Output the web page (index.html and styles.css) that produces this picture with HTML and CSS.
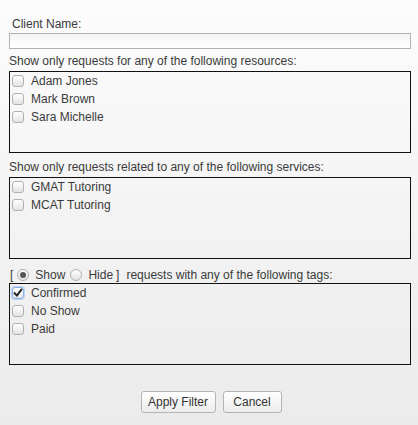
FILE: index.html
```html
<!DOCTYPE html>
<html>
<head>
<meta charset="utf-8">
<link rel="stylesheet" href="styles.css">
</head>
<body>
<div class="filter">
  <div class="label label-client">Client Name:</div>
  <div class="text-input"></div>

  <div class="label">Show only requests for any of the following resources:</div>
  <div class="list-box">
    <div class="item"><span class="cb"></span>Adam Jones</div>
    <div class="item"><span class="cb"></span>Mark Brown</div>
    <div class="item"><span class="cb"></span>Sara Michelle</div>
  </div>

  <div class="label">Show only requests related to any of the following services:</div>
  <div class="list-box">
    <div class="item"><span class="cb"></span>GMAT Tutoring</div>
    <div class="item"><span class="cb"></span>MCAT Tutoring</div>
  </div>

  <div class="label tags-line">
    <span class="bracket">[</span>
    <span class="radio checked"></span><span class="radio-text">Show</span>
    <span class="radio"></span><span class="radio-text">Hide</span>
    <span class="bracket close">]</span>
    <span class="tags-text">requests with any of the following tags:</span>
  </div>
  <div class="list-box">
    <div class="item"><span class="cb checked"><svg viewBox="0 0 12 12" width="12" height="12"><path d="M2.6 6.2 L4.9 8.6 L9.4 2.6" fill="none" stroke="#222" stroke-width="1.9" stroke-linecap="square"/></svg></span>Confirmed</div>
    <div class="item"><span class="cb"></span>No Show</div>
    <div class="item"><span class="cb"></span>Paid</div>
  </div>

  <div class="buttons">
    <button class="btn btn-apply">Apply Filter</button>
    <button class="btn btn-cancel">Cancel</button>
  </div>
</div>
</body>
</html>
```

FILE: styles.css
```css
html, body {
  margin: 0;
  padding: 0;
}
body {
  min-height: 425px;
  background: linear-gradient(#fcfcfc, #ebebeb);
  font-family: "Liberation Sans", Arial, sans-serif;
  font-size: 12px;
  color: #3a3a3a;
}
.filter {
  width: 402px;
  margin-left: 9px;
  padding-top: 17px;
}
.label {
  line-height: 14px;
  margin-top: 7px;
  margin-bottom: 3px;
  white-space: nowrap;
}
.label-client {
  margin-top: 0;
  margin-bottom: 2px;
  padding-left: 3px;
}
.text-input {
  box-sizing: border-box;
  height: 16px;
  border: 1px solid #b3b3b3;
  background: linear-gradient(#f4f4f4, #ffffff);
  margin-bottom: 5px;
}
.label-client + .text-input + .label {
  margin-top: 5px;
}
.list-box {
  box-sizing: border-box;
  height: 82px;
  border: 1px solid #111;
}
.item {
  display: flex;
  align-items: center;
  height: 18px;
  padding-left: 2px;
  white-space: nowrap;
}
.cb {
  box-sizing: border-box;
  width: 12px;
  height: 12px;
  border: 1px solid #b0b0b0;
  border-radius: 3px;
  background: linear-gradient(#ffffff, #e3e3e3);
  margin-right: 7px;
  margin-top: -1px;
  flex: none;
  position: relative;
}
.cb.checked {
  border-color: #8ab0e6;
  box-shadow: 0 0 0 1px #bcd3f3;
  background: linear-gradient(#ffffff, #e6e6e6);
}
.cb svg {
  position: absolute;
  left: -1px;
  top: -1px;
}
.tags-line {
  display: flex;
  align-items: center;
  margin-top: 9px;
  margin-bottom: 1px;
  padding-left: 1px;
}
.bracket {
  margin-right: 4px;
}
.bracket.close {
  margin-left: 3px;
  margin-right: 0;
}
.radio {
  box-sizing: border-box;
  width: 12px;
  height: 12px;
  border: 1px solid #b0b0b0;
  border-radius: 50%;
  background: linear-gradient(#ffffff, #e3e3e3);
  margin-right: 6px;
  position: relative;
  flex: none;
}
.radio.checked::after {
  content: "";
  position: absolute;
  left: 2px;
  top: 2px;
  width: 6px;
  height: 6px;
  border-radius: 50%;
  background: #555;
}
.radio-text {
  margin-right: 5px;
}
.radio-text + .bracket {
  margin-left: -2px;
}
.tags-text {
  margin-left: 7px;
}
.buttons {
  display: flex;
  justify-content: center;
  gap: 7px;
  margin-top: 26px;
  padding-left: 2px;
}
.btn {
  box-sizing: border-box;
  height: 22px;
  border: 1px solid #b4b4b4;
  border-radius: 3px;
  background: linear-gradient(#ffffff, #ececec);
  font-family: "Liberation Sans", Arial, sans-serif;
  font-size: 12px;
  color: #333;
  padding: 0 6px;
  margin: 0;
}
.btn-apply {
  width: 75px;
}
.btn-cancel {
  width: 59px;
}
```
